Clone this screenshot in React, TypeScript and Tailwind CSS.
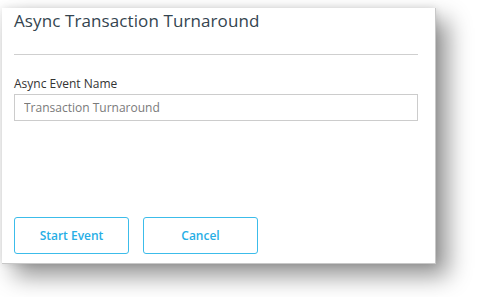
export default function App() {
  return (
    <div className="w-[477px] h-[297px] bg-white overflow-hidden pt-2 pl-[2px]">
      <div
        className="w-[434px] h-[256px] bg-white border-r border-b border-[#c8c8c8] px-3 flex flex-col shadow-[0_0_8px_rgba(0,0,0,0.12),12px_12px_22px_rgba(0,0,0,0.42)]"
        style={{ fontFamily: '"Open Sans", "Noto Sans", sans-serif' }}
      >
        {/* 标题 */}
        <h1 className="text-[17px] tracking-[0.1px] leading-[22px] text-[#34444f] pt-[2px]">
          Async Transaction Turnaround
        </h1>
        <div className="mt-[22px] w-[404px] border-t border-[#cfcfcf]" />

        {/* 输入区 */}
        <label className="mt-[21px] text-[12px] leading-[16px] text-[#333]">
          Async Event Name
        </label>
        <input
          type="text"
          placeholder="Transaction Turnaround"
          className="mt-[2px] w-[404px] h-[27px] px-[9px] border border-[#cccccc] text-[12px] text-[#333] placeholder:text-[#7a7a7a] focus:outline-none"
        />

        {/* 按钮 */}
        <div className="mt-auto mb-[9px] flex gap-[14px]">
          <button className="w-[115px] h-[37px] rounded-[3px] border border-[#3cbcea] text-[12px] font-semibold text-[#27aee5]">
            Start Event
          </button>
          <button className="w-[115px] h-[37px] rounded-[3px] border border-[#3cbcea] text-[12px] font-semibold text-[#27aee5]">
            Cancel
          </button>
        </div>
      </div>
    </div>
  )
}
